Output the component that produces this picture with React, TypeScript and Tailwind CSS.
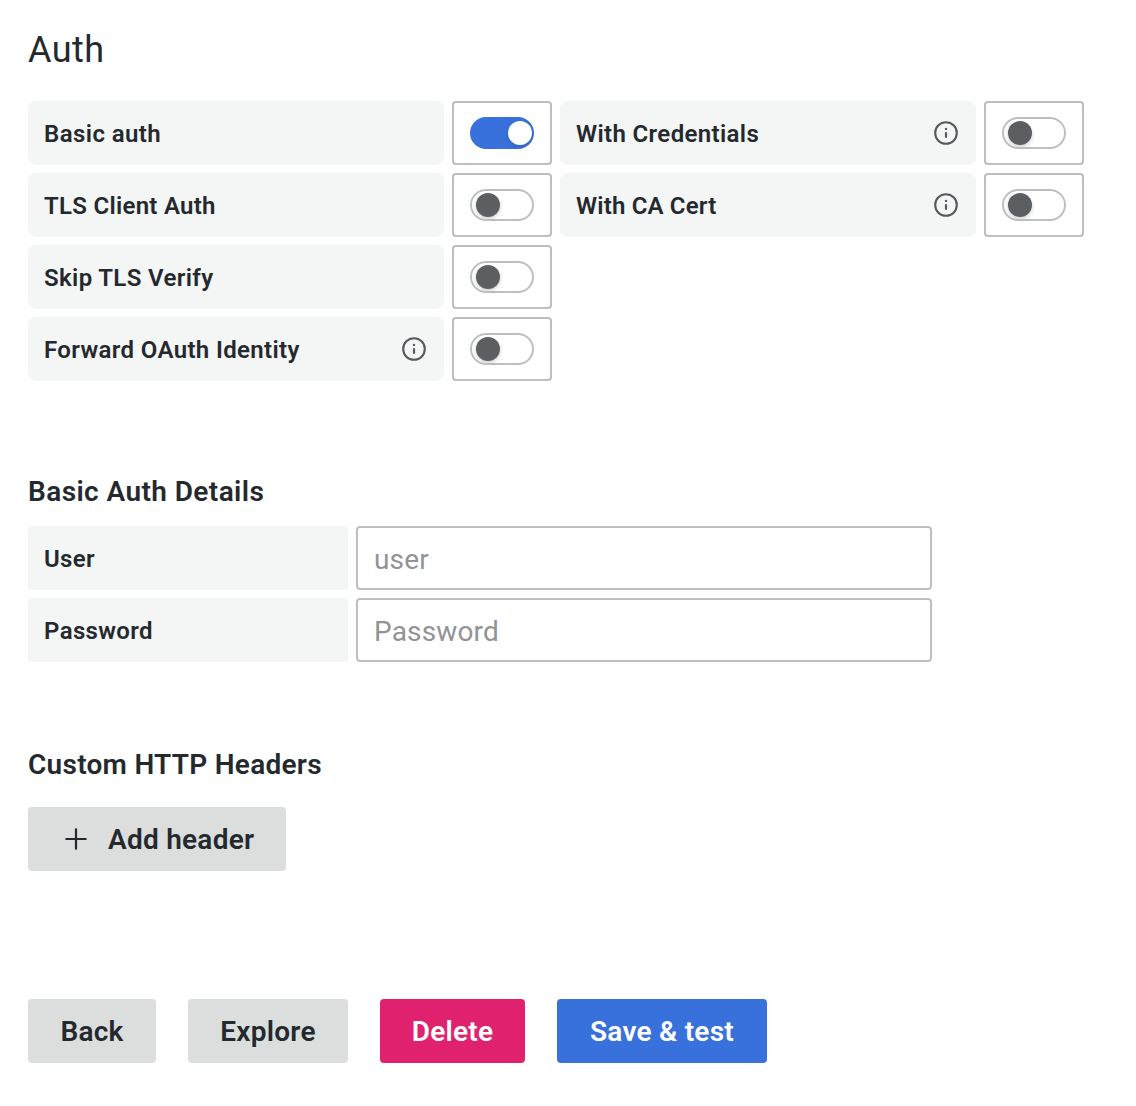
import React from "react";

function InfoIcon() {
  return (
    <svg width="28" height="28" viewBox="0 0 28 28" className="shrink-0" fill="none" stroke="#57595d">
      <circle cx="14" cy="14" r="10.8" strokeWidth="2.1" />
      <path d="M14 14v4" strokeWidth="2.2" strokeLinecap="round" />
      <circle cx="14" cy="9.9" r="1.2" fill="#57595d" stroke="none" />
    </svg>
  );
}

function Toggle({ on = false }: { on?: boolean }) {
  return (
    <div className="flex h-16 w-[100px] items-center justify-center rounded-[4px] border-2 border-[#bdbebe] bg-white">
      {on ? (
        <div className="flex h-8 w-16 items-center justify-end overflow-hidden rounded-full bg-[#3871dc] pr-0.5">
          <div className="size-6 rounded-full bg-white shadow-[0_2px_4px_rgba(24,26,27,0.15)]" />
        </div>
      ) : (
        <div className="flex h-8 w-16 items-center overflow-hidden rounded-full border-2 border-[#bdbebe] bg-white pl-1">
          <div className="size-6 rounded-full bg-[#5b5f62] shadow-[0_2px_4px_rgba(24,26,27,0.2)]" />
        </div>
      )}
    </div>
  );
}

type FieldProps = { label: string; info?: boolean; on?: boolean; tracking?: string };

function Field({ label, info = false, on = false, tracking = "tracking-[0.36px]" }: FieldProps) {
  return (
    <div className="flex gap-2">
      <div className="flex h-16 w-[416px] items-center justify-between rounded-[8px] bg-[#f4f5f5] px-4 text-[24px] font-[570]">
        <span className={`pt-0.5 ${tracking}`}>{label}</span>
        {info && <InfoIcon />}
      </div>
      <Toggle on={on} />
    </div>
  );
}

function TextRow({ label, placeholder }: { label: string; placeholder: string }) {
  return (
    <div className="flex gap-2">
      <label className="flex h-16 w-80 items-center rounded-[4px] bg-[#f4f5f5] pt-0.5 pl-4 text-[24px] font-[570] tracking-[0.36px]">{label}</label>
      <input
        placeholder={placeholder}
        className="h-16 w-[576px] rounded-[4px] border-2 border-[#bdbebe] bg-white px-4 pt-0.5 text-[28px] tracking-[0.15px] outline-none placeholder:text-[#919396]"
      />
    </div>
  );
}

export default function App() {
  return (
    <main className="h-[1106px] w-[1136px] bg-white px-7 pt-7 font-['Roboto',sans-serif] tracking-[0.25px] text-[#24292e]">
      <h3 className="h-[73px] text-[36px] leading-[44px] font-[420] tracking-[0.45px]">Auth</h3>
      <div className="grid grid-cols-[524px_524px] gap-2">
        <Field label="Basic auth" on tracking="tracking-[0.42px]" />
        <Field label="With Credentials" info />
        <Field label="TLS Client Auth" tracking="tracking-[0.28px]" />
        <Field label="With CA Cert" info tracking="tracking-[0.18px]" />
        <div className="col-span-2"><Field label="Skip TLS Verify" /></div>
        <div className="col-span-2"><Field label="Forward OAuth Identity" info /></div>
      </div>
      <h6 className="mt-[93px] h-[52px] text-[28px] leading-9 font-[570] tracking-[0.41px]">Basic Auth Details</h6>
      <div className="flex flex-col gap-2">
        <TextRow label="User" placeholder="user" />
        <TextRow label="Password" placeholder="Password" />
      </div>
      <h6 className="mt-[85px] h-[60px] text-[28px] leading-9 font-[570] tracking-[0.27px]">Custom HTTP Headers</h6>
      <button className="flex h-16 w-[258px] items-center rounded-[4px] bg-[#dcdddd] pl-8 text-[28px] font-[590]">
        <svg width="32" height="32" viewBox="0 0 32 32" fill="none" stroke="#24292e" strokeWidth="2.2" strokeLinecap="round" className="mr-4">
          <path d="M16 6.300v19.400M6.300 16h19.400" />
        </svg>
        <span className="pt-0.5">Add header</span>
      </button>
      <div className="mt-32 flex gap-8 text-[28px] font-[590]">
        <button className="h-16 w-32 rounded-[4px] bg-[#dcdddd] pt-0.5">Back</button>
        <button className="h-16 w-40 rounded-[4px] bg-[#dcdddd] pt-0.5">Explore</button>
        <button className="h-16 w-[145px] rounded-[4px] bg-[#e0226e] pt-0.5 text-white">Delete</button>
        <button className="h-16 w-[210px] rounded-[4px] bg-[#3871dc] pt-0.5 text-white">Save &amp; test</button>
      </div>
    </main>
  );
}
